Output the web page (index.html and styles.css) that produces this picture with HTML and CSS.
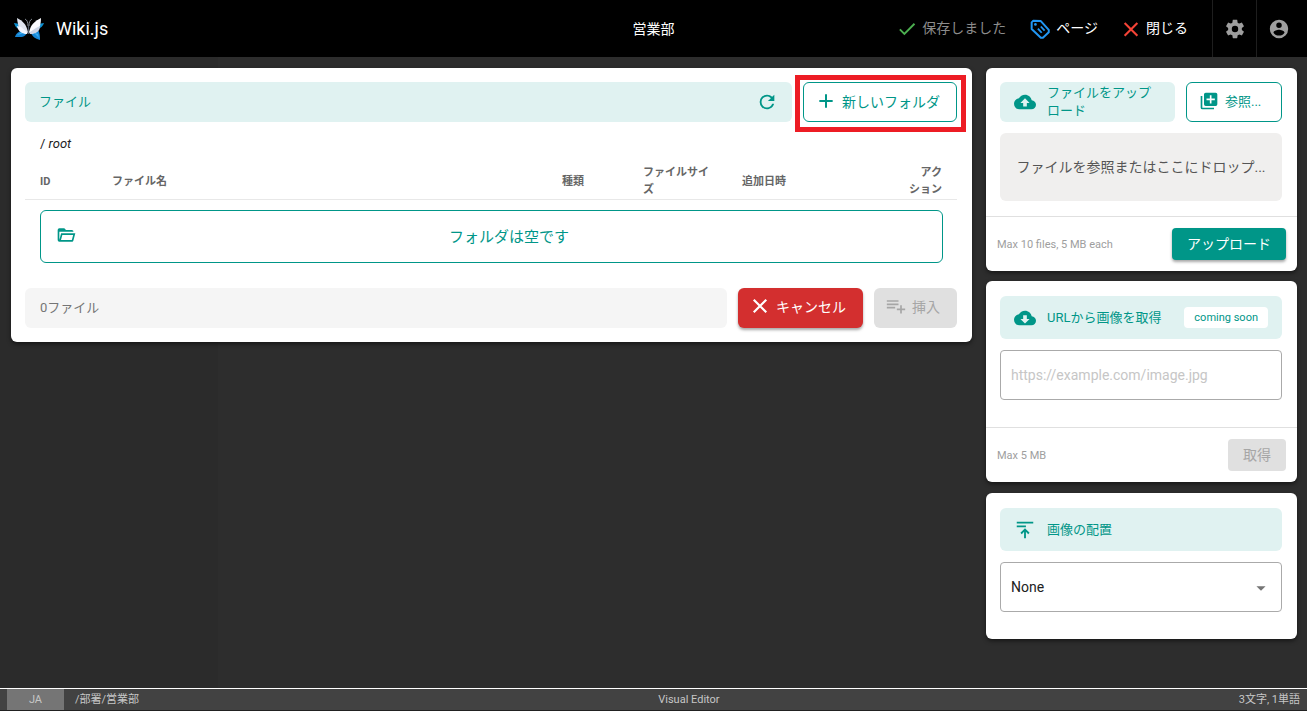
FILE: index.html
```html
<!DOCTYPE html>
<html lang="ja">
<head>
<meta charset="utf-8">
<meta name="viewport" content="width=device-width, initial-scale=1">
<title>営業部 | Wiki.js</title>
<link rel="stylesheet" href="styles.css">
</head>
<body>
<header class="appbar">
  <div class="brand">
    <svg class="logo" viewBox="0 0 30 24" aria-hidden="true">
      <path d="M0 6 6 7 9 12 5 12C2 11 1 9 0 6Z" fill="#0d8fd0"/>
      <path d="M30 6 24 7 21 12 24 12C27 11 29 9 30 6Z" fill="#0d8fd0"/>
      <path d="M1 20C2 16 6 13 13 14 13 18 10 20 6 20Z" fill="#1583d2"/>
      <path d="M3 18C5 16 8 15 12 15L7 17Z" fill="#3db2f2"/>
      <path d="M16 14 24 13C26 16 26 19 26 23 22 22 18 20 16 14Z" fill="#1787d8"/>
      <path d="M19 15 24 17 25 21Z" fill="#36aaf0"/>
      <path d="M3 1C9 4 12 7 14 15L13 17C8 17 4 12 3 1Z" fill="#dfe4ef"/>
      <path d="M3 9 7 10 13 15 13 17C9 17 4 15 3 9Z" fill="#f3f6ff"/>
      <path d="M27 1C21 4 17 7 15 15L16 17C22 17 27 12 27 1Z" fill="#fafbff"/>
      <path d="M26 9 22 11 16 15 16 17C21 17 26 15 26 9Z" fill="#cdd5e7"/>
      <path d="M14 9C14 5 13 3 11 2M15 9C15 5 16 3 18 2" stroke="#808790" stroke-width="1" fill="none"/>
      <path d="M14.500 9V17" stroke="#4b5565" stroke-width="1.200"/>
    </svg>
    <span>Wiki.js</span>
  </div>
  <h1 class="page-title">営業部</h1>
  <div class="actions">
    <button class="bar-btn saved" type="button" disabled>
      <svg class="icon green" viewBox="0 0 24 24" aria-hidden="true"><path d="M2.500 12.500 8.500 18.500 22 5" fill="none" stroke="currentColor" stroke-width="2.500"/></svg><span>保存しました</span></button>
    <button class="bar-btn pages" type="button">
      <svg class="icon blue" viewBox="0 0 24 24" aria-hidden="true"><g fill="none" stroke="currentColor" stroke-width="2.400" stroke-linejoin="round"><path d="M2 4 4 2 13 2.500 22.500 13V16L15.500 22.500H13L2 12Z"/><path d="M9.500 11.500 14 16.500M13 9 17.500 14" stroke-width="2.200"/></g><circle cx="6.500" cy="6.500" r="1.600"/></svg><span>ページ</span></button>
    <button class="bar-btn" type="button">
      <svg class="icon red" viewBox="0 0 24 24" aria-hidden="true"><path d="M3.500 4 20.500 21M20.500 4 3.500 21" fill="none" stroke="currentColor" stroke-width="2.800"/></svg><span>閉じる</span></button>
    <button class="bar-icon" type="button" aria-label="設定">
      <svg class="icon-lg" viewBox="0 0 24 24" aria-hidden="true"><path d="M12,15.500A3.500,3.500 0 0,1 8.500,12A3.500,3.500 0 0,1 12,8.500A3.500,3.500 0 0,1 15.500,12A3.500,3.500 0 0,1 12,15.500M19.430,12.970C19.470,12.650 19.500,12.330 19.500,12C19.500,11.670 19.470,11.340 19.430,11L21.540,9.370C21.730,9.220 21.780,8.950 21.660,8.730L19.660,5.270C19.540,5.050 19.270,4.960 19.050,5.050L16.560,6.050C16.040,5.660 15.500,5.320 14.870,5.070L14.500,2.420C14.460,2.180 14.250,2 14,2H10C9.750,2 9.540,2.180 9.500,2.420L9.130,5.070C8.500,5.320 7.960,5.660 7.440,6.050L4.950,5.050C4.730,4.960 4.460,5.050 4.340,5.270L2.340,8.730C2.210,8.950 2.270,9.220 2.460,9.370L4.570,11C4.530,11.340 4.500,11.670 4.500,12C4.500,12.330 4.530,12.650 4.570,12.970L2.460,14.630C2.270,14.780 2.210,15.050 2.340,15.270L4.340,18.730C4.460,18.950 4.730,19.030 4.950,18.950L7.440,17.940C7.960,18.340 8.500,18.680 9.130,18.930L9.500,21.580C9.540,21.820 9.750,22 10,22H14C14.250,22 14.460,21.820 14.500,21.580L14.870,18.930C15.500,18.670 16.040,18.340 16.560,17.940L19.050,18.950C19.270,19.030 19.540,18.950 19.660,18.730L21.660,15.270C21.780,15.050 21.730,14.780 21.540,14.630L19.430,12.970Z"/></svg></button>
    <button class="bar-icon" type="button" aria-label="アカウント">
      <svg class="icon-lg" viewBox="0 0 24 24" aria-hidden="true"><path d="M12,19.200C9.500,19.200 7.290,17.920 6,16C6.030,14 10,12.900 12,12.900C14,12.900 17.970,14 18,16C16.710,17.920 14.500,19.200 12,19.200M12,5A3,3 0 0,1 15,8A3,3 0 0,1 12,11A3,3 0 0,1 9,8A3,3 0 0,1 12,5M12,2A10,10 0 0,0 2,12A10,10 0 0,0 12,22A10,10 0 0,0 22,12C22,6.470 17.500,2 12,2Z"/></svg></button>
  </div>
</header>

<main class="workspace">
  <section class="card browser">
    <div class="row">
      <div class="banner grow">
        <h2 class="banner-title">ファイル</h2>
        <button class="plain" type="button" aria-label="更新"><svg class="icon-lg" viewBox="0 0 24 24" aria-hidden="true"><path d="M17.650,6.350C16.200,4.900 14.210,4 12,4A8,8 0 0,0 4,12A8,8 0 0,0 12,20C15.730,20 18.840,17.450 19.730,14H17.650C16.830,16.330 14.610,18 12,18A6,6 0 0,1 6,12A6,6 0 0,1 12,6C13.660,6 15.140,6.690 16.220,7.780L13,11H20V4L17.650,6.350Z"/></svg></button>
      </div>
      <div class="highlight">
        <button class="btn outline new-folder" type="button"><svg class="icon" viewBox="0 0 24 24" aria-hidden="true"><path d="M20 13.200H13.200V20H10.800V13.200H4V10.800H10.800V4H13.200V10.800H20Z"/></svg>新しいフォルダ</button>
      </div>
    </div>
    <div class="path">/ <em>root</em></div>
    <table class="files">
      <colgroup><col class="c-id"><col><col class="c-type"><col class="c-size"><col class="c-date"><col class="c-action"></colgroup>
      <thead><tr><th>ID</th><th>ファイル名</th><th>種類</th><th>ファイルサイズ</th><th>追加日時</th><th class="right">アク<br>ション</th></tr></thead>
    </table>
    <div class="empty">
      <svg class="icon" viewBox="0 0 24 24" aria-hidden="true"><path d="M6.100,10L4,18V8H21A2,2 0 0,0 19,6H12L10,4H4A2,2 0 0,0 2,6V18A2,2 0 0,0 4,20H19C19.900,20 20.700,19.400 20.900,18.500L23.200,10H6.100M19,18H6L7.600,12H20.600L19,18Z"/></svg>
      <p>フォルダは空です</p>
    </div>
    <div class="row">
      <div class="count grow">0ファイル</div>
      <button class="btn danger" type="button"><svg class="icon" viewBox="0 0 24 24" aria-hidden="true"><path d="M4.500 4.500 19.500 19.500M19.500 4.500 4.500 19.500" fill="none" stroke="currentColor" stroke-width="2.600"/></svg>キャンセル</button>
      <button class="btn insert" type="button" disabled><svg class="icon" viewBox="0 0 24 24" aria-hidden="true"><path d="M1 5H15V7H1ZM1 9H15V11H1ZM1 13H11V15H1ZM17 11H19V15H23V17H19V21H17V17H13V15H17Z"/></svg>挿入</button>
    </div>
  </section>

  <aside class="side">
    <section class="card">
      <div class="card-body">
        <div class="row">
          <div class="banner grow"><svg class="icon-lg" viewBox="0 0 24 24" aria-hidden="true"><path d="M14,13V17H10V13H7L12,8L17,13M19.350,10.030C18.670,6.590 15.640,4 12,4C9.110,4 6.600,5.640 5.350,8.030C2.340,8.360 0,10.900 0,14A6,6 0 0,0 6,20H19A5,5 0 0,0 24,15C24,12.360 21.950,10.220 19.350,10.030Z"/></svg><h2 class="banner-title grow">ファイルをアップロード</h2></div>
          <button class="btn outline browse" type="button"><svg class="icon" viewBox="0 0 24 24" aria-hidden="true"><path d="M19,11H15V15H13V11H9V9H13V5H15V9H19M20,2H8A2,2 0 0,0 6,4V16A2,2 0 0,0 8,18H20A2,2 0 0,0 22,16V4A2,2 0 0,0 20,2M4,6H2V20A2,2 0 0,0 4,22H18V20H4V6Z"/></svg>参照...</button>
        </div>
        <div class="drop">ファイルを参照またはここにドロップ...</div>
      </div>
      <div class="card-foot"><span>Max 10 files, 5 MB each</span><button class="small-btn primary" type="button">アップロード</button></div>
    </section>

    <section class="card">
      <div class="card-body spacious">
        <div class="banner tall"><svg class="icon-lg" viewBox="0 0 24 24" aria-hidden="true"><path d="M17,13L12,18L7,13H10V9H14V13M19.350,10.030C18.670,6.590 15.640,4 12,4C9.110,4 6.600,5.640 5.350,8.030C2.340,8.360 0,10.900 0,14A6,6 0 0,0 6,20H19A5,5 0 0,0 24,15C24,12.360 21.950,10.220 19.350,10.030Z"/></svg><h2 class="banner-title grow">URLから画像を取得</h2><span class="chip">coming soon</span></div>
        <input class="field" type="url" aria-label="画像のURL" placeholder="https://example.com/image.jpg">
      </div>
      <div class="card-foot"><span>Max 5 MB</span><button class="small-btn" type="button" disabled>取得</button></div>
    </section>

    <section class="card">
      <div class="card-body spacious">
        <div class="banner tall"><svg class="icon-lg" viewBox="0 0 24 24" aria-hidden="true"><path d="M3 3H21V5H3ZM3 7H13V9H3ZM11 21V14L8.500 16.500 7 15 12 10 17 15 15.500 16.500 13 14V21Z"/></svg><h2 class="banner-title"><label for="alignment">画像の配置</label></h2></div>
        <div class="select-wrap">
          <select class="field" id="alignment"><option>None</option></select>
          <svg class="caret" viewBox="0 0 24 24" aria-hidden="true"><path d="M7 10 12 15 17 10Z"/></svg>
        </div>
      </div>
    </section>
  </aside>
</main>

<footer class="status">
  <div class="status-left"><span class="locale">JA</span><span>/部署/営業部</span></div>
  <span>Visual Editor</span>
  <span>3文字, 1単語</span>
</footer>
</body>
</html>
```

FILE: styles.css
```css
* { box-sizing: border-box; }

body {
  --teal: #009688;
  --mint: #e0f2f1;
  margin: 0;
  min-height: 100vh;
  display: flex;
  flex-direction: column;
  background: #2d2d2d;
  color: #212121;
  font-family: Roboto, "Noto Sans CJK JP", sans-serif;
  font-size: 14px;
}

h1, h2, p { margin: 0; font-weight: 400; }
button, input, select { font: inherit; color: inherit; }
button { border: 0; padding: 0; background: none; white-space: nowrap; }
svg { display: block; flex: none; fill: currentColor; }
.icon { width: 20px; height: 20px; }
.icon-lg { width: 22px; height: 22px; }
.grow { flex: 1; min-width: 0; }

.appbar {
  display: grid;
  grid-template-columns: 1fr auto 1fr;
  align-items: center;
  height: 57px;
  padding: 0 7px 0 14px;
  background: #000;
  color: #fff;
  box-shadow: 0 1px 1px #1b1b1b;
}
.brand { display: flex; align-items: center; gap: 12px; font-size: 18px; }
.logo { width: 30px; height: 24px; }
.page-title { padding: 0 7px 2px 0; font-size: 14px; }
.actions { display: flex; align-items: center; justify-content: flex-end; align-self: stretch; gap: 24px; }
.bar-btn { display: flex; align-items: center; gap: 6px; }
.bar-btn span { padding-bottom: 3px; }
.bar-btn .icon { width: 18px; }
.pages .icon { width: 20px; }
.saved { color: #8c8c8c; }
.green { color: #4caf50; }
.blue { color: #2196f3; }
.red { color: #f44336; }
.bar-icon {
  display: flex;
  align-items: center;
  justify-content: center;
  width: 44px;
  align-self: stretch;
  border-left: 1px solid #1e1e1e;
  color: #9e9e9e;
}
.bar-icon + .bar-icon { margin-left: -24px; }

.workspace {
  flex: 1;
  display: flex;
  align-items: flex-start;
  gap: 14px;
  padding: 11px 10px 11px 11px;
  background: linear-gradient(90deg, #2b2b2b 218px, #2d2d2d 218px);
}
.card { background: #fff; border-radius: 6px; box-shadow: 0 2px 4px rgba(0, 0, 0, .5); }
.browser { flex: 1; min-width: 0; padding: 14px 15px 14px 14px; }
.side { width: 311px; flex: none; display: flex; flex-direction: column; gap: 10px; }
.row { display: flex; align-items: stretch; gap: 11px; }

.banner {
  display: flex;
  align-items: center;
  min-height: 40px;
  padding: 0 14px;
  background: var(--mint);
  border-radius: 6px;
  color: var(--teal);
}
.browser .banner { justify-content: space-between; }
.side .banner { gap: 11px; }
.banner-title { font-size: 13px; line-height: 18px; }
.tall { min-height: 43px; }

.btn {
  display: flex;
  align-items: center;
  gap: 6px;
  min-height: 40px;
  padding: 0 12px 3px;
  border-radius: 6px;
}
.outline { border: 1px solid var(--teal); color: var(--teal); }
.highlight { position: relative; }
.highlight::after {
  content: "";
  position: absolute;
  inset: -7px -9px -10px -8px;
  border: 5px solid #ed1c24;
  pointer-events: none;
}
.new-folder { padding-right: 16px; }
.browse { width: 96px; font-size: 13px; }
.danger { width: 125px; background: #d32f2f; color: #fff; box-shadow: 0 2px 3px rgba(0, 0, 0, .35); }
.insert { width: 83px; background: #e0e0e0; color: #a6a6a6; }

.path { padding: 13px 15px 11px; font-size: 13px; line-height: 18px; }
.files { width: 100%; table-layout: fixed; border-collapse: collapse; }
.files th {
  padding: 0 15px;
  height: 35px;
  border-bottom: 1px solid #e8e8e8;
  color: #666;
  font-size: 11px;
  font-weight: 700;
  line-height: 17px;
  text-align: left;
}
.files .right { text-align: right; }
.c-id { width: 72px; }
.c-type { width: 81px; }
.c-size { width: 99px; }
.c-date { width: 158px; }
.c-action { width: 72px; }

.empty {
  display: flex;
  align-items: center;
  gap: 15px;
  margin: 10px 14px 25px 15px;
  padding: 0 15px 2px;
  height: 53px;
  border: 1px solid var(--teal);
  border-radius: 6px;
  color: var(--teal);
  font-size: 15px;
}
.empty p { flex: 1; text-align: center; }
.count { display: flex; align-items: center; padding: 0 15px 2px; background: #f5f5f5; border-radius: 6px; color: #757575; font-size: 13px; }

.card-body { padding: 14px 15px 15px 14px; }
.spacious { padding-top: 15px; padding-bottom: 27px; }
.drop {
  display: flex;
  align-items: center;
  justify-content: center;
  margin-top: 11px;
  padding-bottom: 2px;
  height: 68px;
  background: #f0efee;
  border-radius: 6px;
  color: #555;
  font-size: 14px;
  white-space: nowrap;
}
.card-foot {
  display: flex;
  align-items: center;
  justify-content: space-between;
  padding: 11px;
  border-top: 1px solid #e0e0e0;
  color: #9e9e9e;
  font-size: 11px;
}
.small-btn { min-height: 32px; padding: 0 15px 3px; border-radius: 4px; background: #e0e0e0; color: #a6a6a6; font-size: 14px; }
.primary { background: var(--teal); color: #fff; box-shadow: 0 2px 3px rgba(0, 0, 0, .35); }
.chip { padding: 0 10px; border-radius: 4px; background: #fff; font-size: 11px; line-height: 21px; }
.field {
  display: block;
  width: 100%;
  height: 50px;
  margin-top: 11px;
  padding: 0 10px;
  border: 1px solid #aaa;
  border-radius: 4px;
  background: #fff;
  font-size: 14px;
  appearance: none;
}
.field::placeholder { color: #c6c6c6; }
.select-wrap { position: relative; }
.caret { position: absolute; right: 10px; top: 15px; width: 22px; height: 22px; color: #757575; pointer-events: none; }
.side .card:last-child { margin-top: 1px; }

.status {
  display: flex;
  align-items: center;
  justify-content: space-between;
  height: 23px;
  padding: 0 7px;
  border-top: 1px solid #fff;
  border-bottom: 1px solid #212121;
  background: #424242;
  color: #c6c6c6;
  font-size: 11px;
  line-height: 21px;
}
.status-left { display: flex; align-items: center; gap: 11px; }
.locale { width: 57px; background: #757575; text-align: center; }
```
